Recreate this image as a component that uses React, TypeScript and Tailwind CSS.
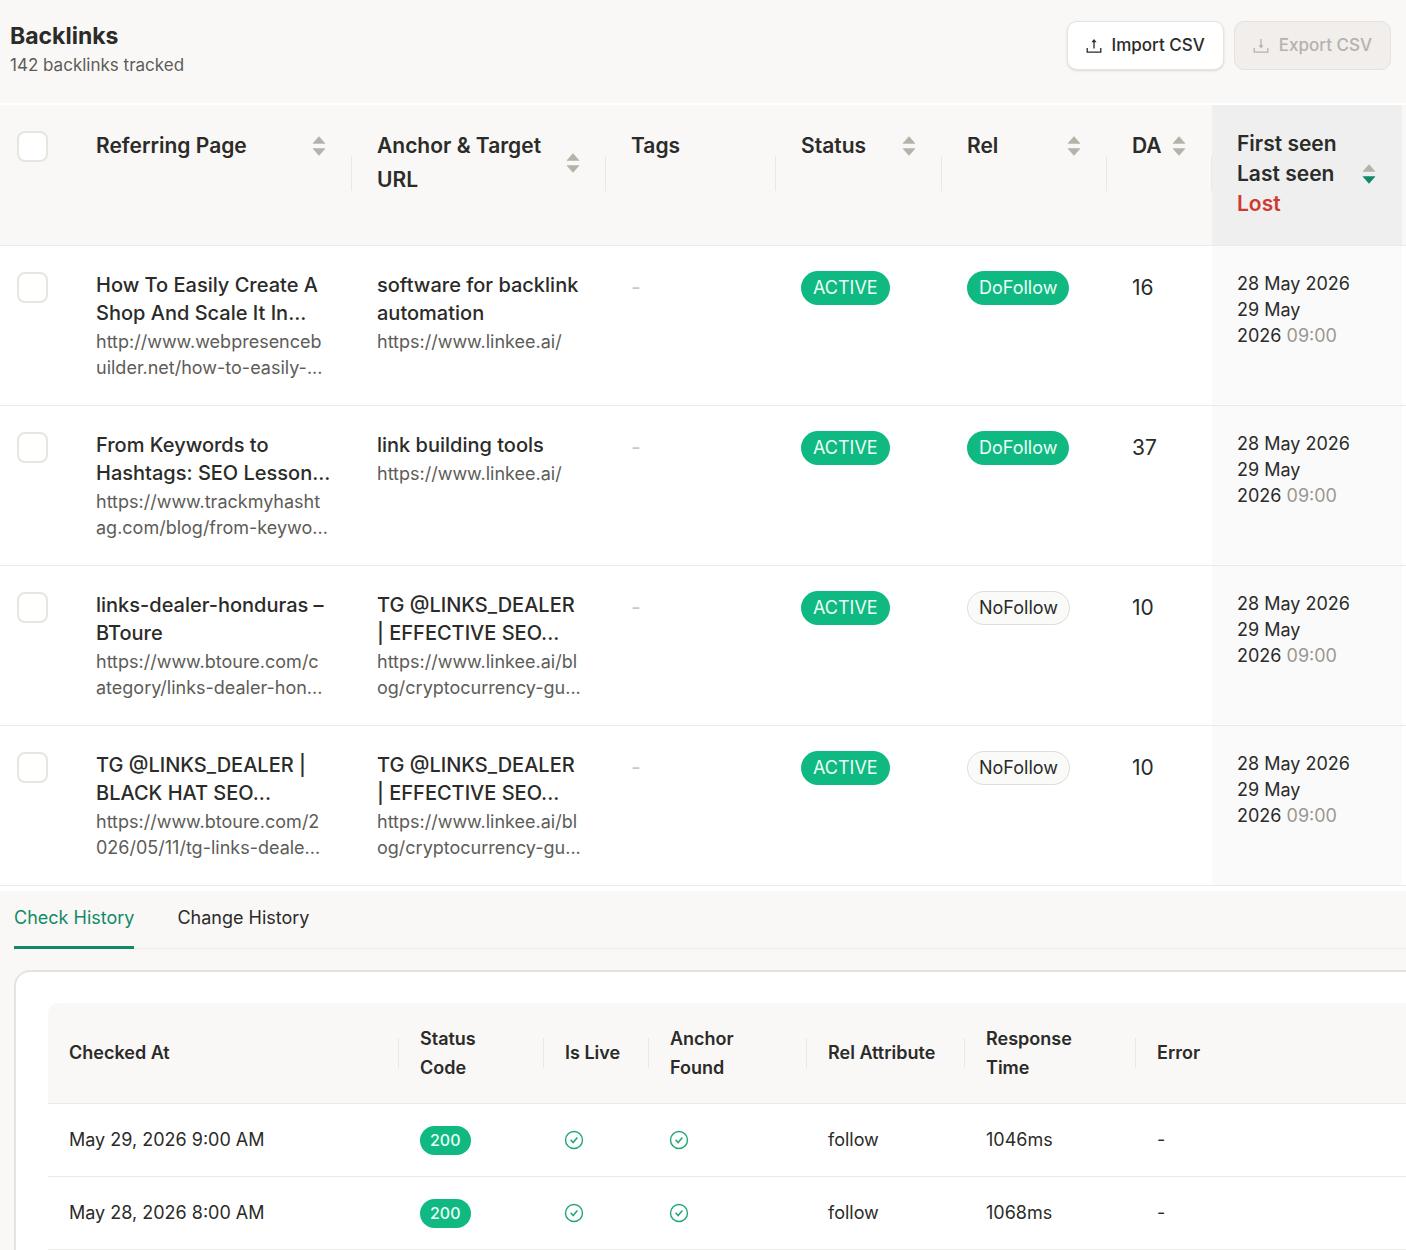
import React from "react";

type Backlink = {
  page: string;
  pageUrl: string;
  anchor: string;
  target: string;
  rel: "DoFollow" | "NoFollow";
  da: number;
};

const backlinks: Backlink[] = [
  {
    page: "How To Easily Create A\nShop And Scale It In...",
    pageUrl: "http://www.webpresenceb\nuilder.net/how-to-easily-...",
    anchor: "software for backlink\nautomation",
    target: "https://www.linkee.ai/",
    rel: "DoFollow",
    da: 16,
  },
  {
    page: "From Keywords to\nHashtags: SEO Lesson...",
    pageUrl: "https://www.trackmyhasht\nag.com/blog/from-keywo...",
    anchor: "link building tools",
    target: "https://www.linkee.ai/",
    rel: "DoFollow",
    da: 37,
  },
  {
    page: "links-dealer-honduras –\nBToure",
    pageUrl: "https://www.btoure.com/c\nategory/links-dealer-hon...",
    anchor: "TG @LINKS_DEALER\n| EFFECTIVE SEO...",
    target: "https://www.linkee.ai/bl\nog/cryptocurrency-gu...",
    rel: "NoFollow",
    da: 10,
  },
  {
    page: "TG @LINKS_DEALER |\nBLACK HAT SEO...",
    pageUrl: "https://www.btoure.com/2\n026/05/11/tg-links-deale...",
    anchor: "TG @LINKS_DEALER\n| EFFECTIVE SEO...",
    target: "https://www.linkee.ai/bl\nog/cryptocurrency-gu...",
    rel: "NoFollow",
    da: 10,
  },
];

const checks = [
  { at: "May 29, 2026 9:00 AM", code: 200, rel: "follow", time: "1046ms" },
  { at: "May 28, 2026 8:00 AM", code: 200, rel: "follow", time: "1068ms" },
];

function TrayIcon({ down = false }: { down?: boolean }) {
  return (
    <svg viewBox="0 0 16 16" className="size-4 shrink-0" fill="none" stroke="currentColor" strokeWidth="1.3" aria-hidden="true">
      <path d="M1.2 10v4.2h13.6V10" />
      {down ? (
        <>
          <path d="M8 1v8" />
          <path d="M5.5 7.2h5L8 10.6z" fill="currentColor" stroke="none" />
        </>
      ) : (
        <>
          <path d="M8 10.5V3" />
          <path d="M5.5 4.3h5L8 0.9z" fill="currentColor" stroke="none" />
        </>
      )}
    </svg>
  );
}

function SortIcon({ active = false }: { active?: boolean }) {
  return (
    <svg viewBox="0 0 14 20" className="h-5 w-3.5 shrink-0" aria-hidden="true">
      <path d="M7 0.3 L13.2 7.2 Q13.4 7.8 12.8 7.8 H1.2 Q0.6 7.8 0.8 7.2 Z" fill="#b5b2aa" />
      <path
        d="M7 19.7 L13.2 12.8 Q13.4 12.2 12.8 12.2 H1.2 Q0.6 12.2 0.8 12.8 Z"
        fill={active ? "#128a68" : "#b5b2aa"}
      />
    </svg>
  );
}

function CheckCircle() {
  return (
    <svg viewBox="0 0 20 20" className="size-5" fill="none" stroke="#1fa874" role="img" aria-label="Yes">
      <circle cx="10" cy="10" r="8.5" strokeWidth="1.4" />
      <path d="M6.6 9.8l2.5 2.7 4.3-5.1" strokeWidth="1.5" />
    </svg>
  );
}

function Tick({ label }: { label: string }) {
  return (
    <input
      type="checkbox"
      aria-label={label}
      className="block size-[31px] appearance-none rounded-lg border-2 border-[#e7e5e0] bg-white checked:bg-[#128a68]"
    />
  );
}

function Divider() {
  return <span className="absolute right-0 top-[51px] h-[35px] w-px bg-[#ebe8e3]" />;
}

function SortHead({ children, tight = false }: { children: React.ReactNode; tight?: boolean }) {
  return (
    <th className="relative pl-[25px] pr-[26px] pt-6 text-left font-semibold">
      <button className={tight ? "flex items-center gap-2.5 text-left" : "flex w-full items-center justify-between text-left"}>
        <span>{children}</span>
        <SortIcon />
      </button>
      <Divider />
    </th>
  );
}

function HistoryHead({ children, edge }: { children: React.ReactNode; edge?: "first" | "last" }) {
  return (
    <th
      className={
        edge === "first"
          ? "relative rounded-tl-[10px] bg-[#f9f8f6] pl-[21px] text-left font-semibold"
          : "relative bg-[#f9f8f6] pl-[21px] text-left font-semibold"
      }
    >
      {children}
      {edge !== "last" && <span className="absolute right-0 top-[35px] h-[30px] w-px bg-[#ebe8e3]" />}
    </th>
  );
}

export default function App() {
  return (
    <div className="flex min-h-screen flex-col overflow-hidden bg-[#f9f8f6] font-['Inter',sans-serif] text-[#2b2b29]">
      <header className="flex h-[103px] items-start justify-between pl-2.5 pr-[15px] pt-[21px]">
        <div>
          <h1 className="text-[23px] font-bold leading-[30px]">Backlinks</h1>
          <p className="text-[17px] leading-7 text-[#5d5c58]">142 backlinks tracked</p>
        </div>
        <div className="flex gap-2.5">
          <button className="flex h-[49px] items-center gap-2.5 rounded-[10px] border border-[#e5e3dd] bg-white px-[18px] text-[17px] font-medium shadow-sm">
            <TrayIcon />
            Import CSV
          </button>
          <button
            disabled
            className="flex h-[49px] items-center gap-2.5 rounded-[10px] border border-[#e5e1dc] bg-[#f1eeeb] px-[18px] text-[17px] font-medium text-[#b5b2ad]"
          >
            <TrayIcon down />
            Export CSV
          </button>
        </div>
      </header>

      <main className="flex flex-1 flex-col">
        <div className="border-t-2 border-white bg-white pb-[5px]">
          <table className="w-full table-fixed">
            <colgroup>
              <col className="w-[71px]" />
              <col />
              <col className="w-[254px]" />
              <col className="w-[170px]" />
              <col className="w-[166px]" />
              <col className="w-[165px]" />
              <col className="w-[105px]" />
              <col className="w-[190px]" />
              <col className="w-1" />
            </colgroup>
            <thead>
              <tr className="h-[140px] border-b border-[#eeebe7] bg-[#f9f8f6] align-top text-[21px] leading-[34px]">
                <th className="pl-[17px] pt-[26px]">
                  <Tick label="Select all backlinks" />
                </th>
                <SortHead>Referring Page</SortHead>
                <SortHead>
                  Anchor &amp; Target
                  <br />
                  URL
                </SortHead>
                <th className="relative px-[25px] pt-6 text-left font-semibold">
                  Tags
                  <Divider />
                </th>
                <SortHead>Status</SortHead>
                <SortHead>Rel</SortHead>
                <SortHead tight>DA</SortHead>
                <th className="bg-[#efefef] pl-[25px] pr-[26px] pt-6 text-left font-semibold leading-[30px]">
                  <button className="flex w-full items-center justify-between text-left">
                    <span>
                      First seen
                      <br />
                      Last seen
                      <br />
                      <span className="text-[#cf3a2e]">Lost</span>
                    </span>
                    <SortIcon active />
                  </button>
                </th>
                <td />
              </tr>
            </thead>
            <tbody>
              {backlinks.map((b, i) => (
                <tr key={i} className="h-40 border-b border-[#eceae6] align-top">
                  <td className="pl-[17px] pt-[26px]">
                    <Tick label={"Select backlink " + (i + 1)} />
                  </td>
                  <td className="whitespace-pre pl-[25px] pt-[25px]">
                    <div className="text-xl font-medium leading-7">{b.page}</div>
                    <a href="#" className="mt-0.5 block text-lg leading-[26px] text-[#5d5c58]">
                      {b.pageUrl}
                    </a>
                  </td>
                  <td className="whitespace-pre pl-[25px] pt-[25px]">
                    <div className="text-xl font-medium leading-7">{b.anchor}</div>
                    <a href="#" className="mt-0.5 block text-lg leading-[26px] text-[#5d5c58]">
                      {b.target}
                    </a>
                  </td>
                  <td className="pl-[25px] pt-[25px] text-[21px] leading-[34px] text-[#c9c6c0]">-</td>
                  <td className="pl-[25px] pt-[25px]">
                    <span className="inline-block rounded-full bg-[#10b981] px-3 text-lg leading-[34px] text-[#eafff7]">
                      ACTIVE
                    </span>
                  </td>
                  <td className="pl-[25px] pt-[25px]">
                    <span
                      className={
                        b.rel === "DoFollow"
                          ? "inline-block rounded-full bg-[#10b981] px-3 text-lg leading-[34px] text-[#eafff7]"
                          : "inline-block rounded-full border border-[#deddd9] bg-[#fafaf9] px-[11px] text-lg leading-[32px]"
                      }
                    >
                      {b.rel}
                    </span>
                  </td>
                  <td className="pl-[25px] pt-[25px] text-[21px] leading-[34px]">{b.da}</td>
                  <td className="bg-[#fafafa] pl-[25px] pt-[25px] text-lg leading-[26px]">
                    28 May 2026
                    <br />
                    29 May
                    <br />
                    2026 <span className="text-[#9a978f]">09:00</span>
                  </td>
                  <td />
                </tr>
              ))}
            </tbody>
          </table>
        </div>

        <div role="tablist" className="ml-3.5 flex h-[58px] gap-[43px] border-b border-[#eeebe7] text-lg">
          <button role="tab" aria-selected="true" className="-mb-px border-b-[3px] border-[#128a68] text-[#128a68]">
            Check History
          </button>
          <button role="tab" aria-selected="false" className="-mb-px border-b-[3px] border-transparent">
            Change History
          </button>
        </div>

        <section className="ml-3.5 mt-[21px] flex-1 rounded-tl-2xl border-l-2 border-t-2 border-[#e5e3de] bg-white pl-8 pt-[31px]">
          <table className="w-full table-fixed text-lg">
            <colgroup>
              <col className="w-[351px]" />
              <col className="w-[145px]" />
              <col className="w-[105px]" />
              <col className="w-[158px]" />
              <col className="w-[158px]" />
              <col className="w-[171px]" />
              <col />
            </colgroup>
            <thead>
              <tr className="h-[101px] border-b border-[#eceae6] leading-[29px]">
                <HistoryHead edge="first">Checked At</HistoryHead>
                <HistoryHead>
                  Status
                  <br />
                  Code
                </HistoryHead>
                <HistoryHead>Is Live</HistoryHead>
                <HistoryHead>
                  Anchor
                  <br />
                  Found
                </HistoryHead>
                <HistoryHead>Rel Attribute</HistoryHead>
                <HistoryHead>
                  Response
                  <br />
                  Time
                </HistoryHead>
                <HistoryHead edge="last">Error</HistoryHead>
              </tr>
            </thead>
            <tbody>
              {checks.map((c) => (
                <tr key={c.at} className="h-[73px] border-b border-[#eceae6]">
                  <td className="pl-[21px]">{c.at}</td>
                  <td className="pl-[21px]">
                    <span className="inline-block rounded-full bg-[#10b981] px-2.5 align-middle text-base font-medium leading-[29px] text-[#eafff7]">
                      {c.code}
                    </span>
                  </td>
                  <td className="pl-5">
                    <CheckCircle />
                  </td>
                  <td className="pl-5">
                    <CheckCircle />
                  </td>
                  <td className="pl-[21px]">{c.rel}</td>
                  <td className="pl-[21px]">{c.time}</td>
                  <td className="pl-[21px]">-</td>
                </tr>
              ))}
            </tbody>
          </table>
        </section>
      </main>
    </div>
  );
}
